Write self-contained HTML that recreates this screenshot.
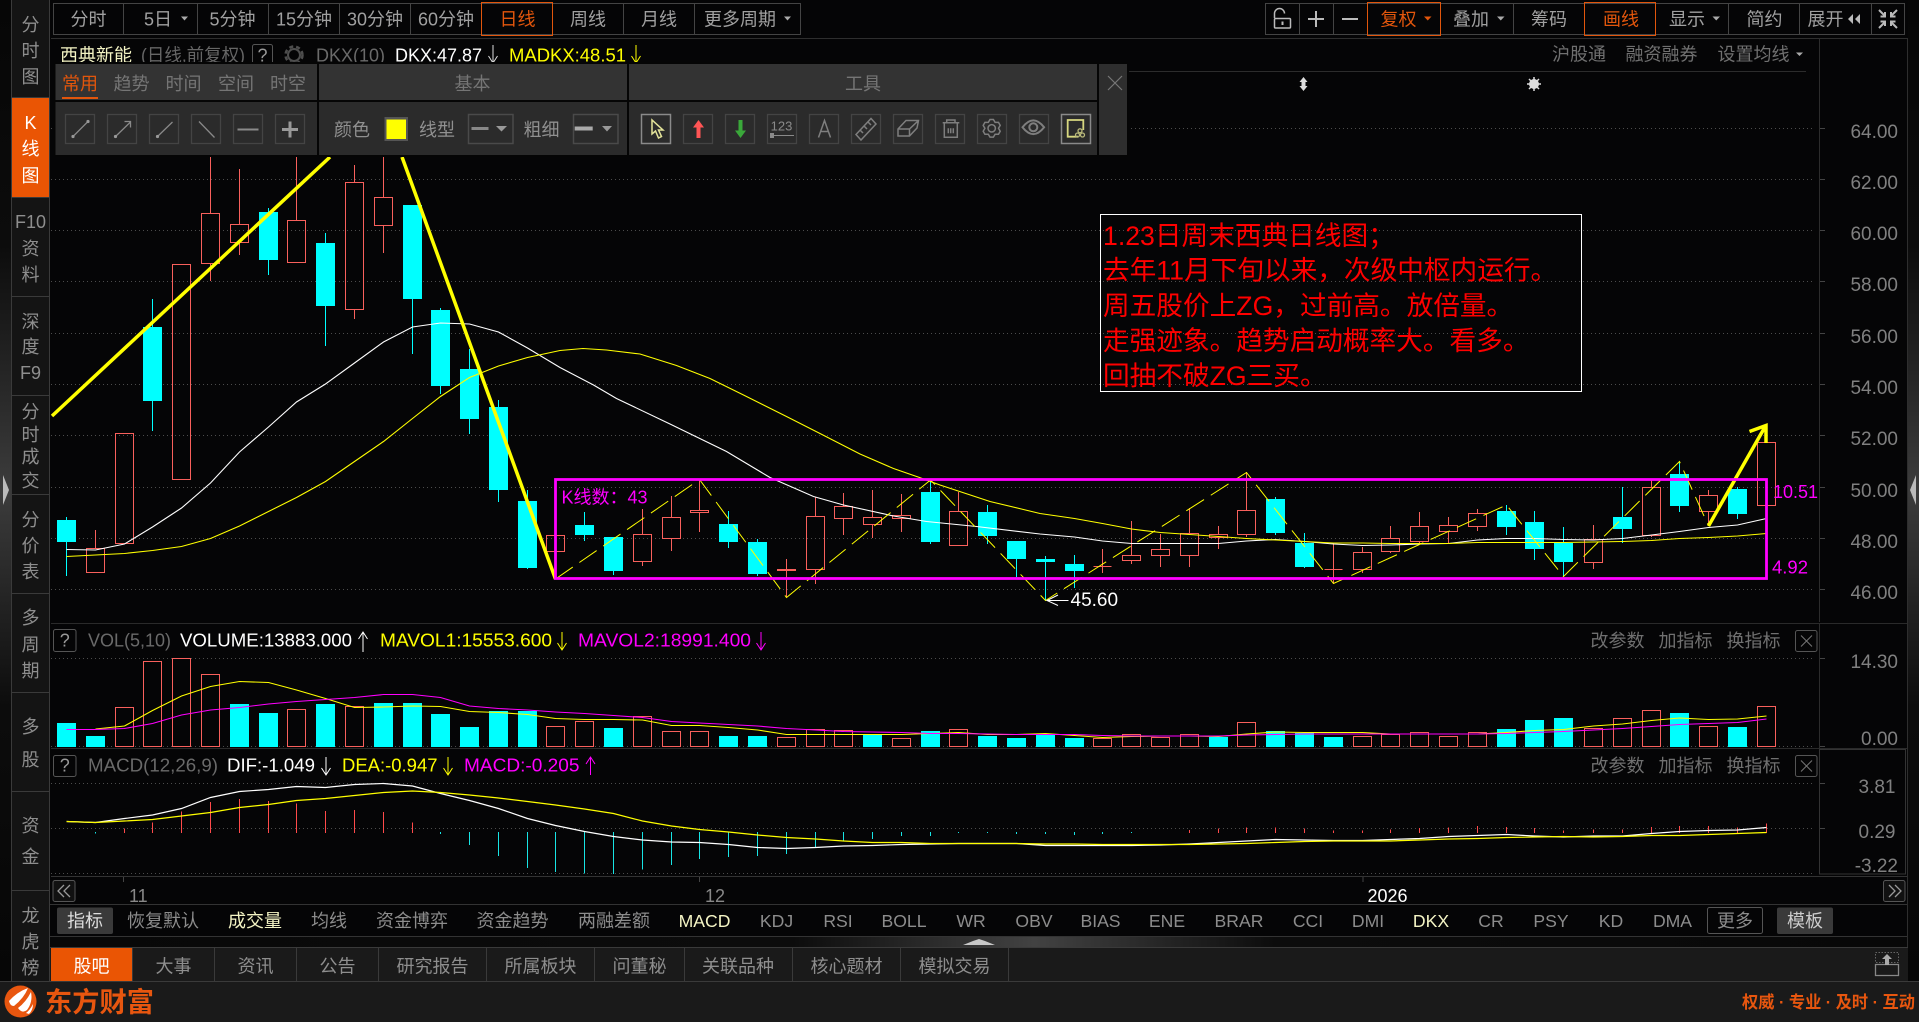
<!DOCTYPE html>
<html lang="zh"><head><meta charset="utf-8"><title>西典新能</title>
<style>html,body{margin:0;padding:0;background:#050506;overflow:hidden}svg{display:block}text{white-space:pre}</style></head>
<body>
<svg xmlns="http://www.w3.org/2000/svg" width="1919" height="1022" viewBox="0 0 1919 1022" font-family="'Liberation Sans','Noto Sans CJK SC',sans-serif" font-size="18">
<defs>
<linearGradient id="side" x1="0" y1="0" x2="0" y2="1"><stop offset="0" stop-color="#060606"/><stop offset=".25" stop-color="#0c0c0c"/><stop offset=".5" stop-color="#3c3c3c"/><stop offset=".72" stop-color="#0c0c0c"/><stop offset="1" stop-color="#060606"/></linearGradient>
<linearGradient id="split" x1="0" y1="0" x2="1" y2="0"><stop offset="0" stop-color="#080808"/><stop offset=".4" stop-color="#0c0c0c"/><stop offset=".53" stop-color="#424242"/><stop offset=".66" stop-color="#0c0c0c"/><stop offset="1" stop-color="#080808"/></linearGradient>
</defs>
<rect width="1919" height="1022" fill="#050506"/>

<!-- left strip -->
<rect x="0" y="0" width="11" height="982" fill="url(#side)"/>
<path d="M3 475L9 490L3 505Z" fill="#bbb"/>
<rect x="1908" y="0" width="11" height="982" fill="url(#side)"/>
<path d="M1916 475L1910 490L1916 505Z" fill="#bbb"/>
<rect x="11" y="0" width="39" height="982" fill="#141414"/>
<rect x="12" y="98" width="37" height="99" fill="#ea5504"/>
<path d="M12 97.5H49M12 197.5H49M12 296.5H49M12 395.5H49M12 494.5H49M12 593.5H49M12 692.5H49M12 791.5H49M12 890.5H49M49.5 0V982M11.5 0V982" stroke="#3a3a3a" fill="none"/>
<g text-anchor="middle" fill="#8e8e8e">
<text x="30.5" y="31">分</text><text x="30.5" y="57">时</text><text x="30.5" y="83">图</text>
<g fill="#fff"><text x="30.5" y="129">K</text><text x="30.5" y="155">线</text><text x="30.5" y="182">图</text></g>
<text x="30.5" y="228">F10</text><text x="30.5" y="255">资</text><text x="30.5" y="281">料</text>
<text x="30.5" y="328">深</text><text x="30.5" y="353">度</text><text x="30.5" y="379">F9</text>
<text x="30.5" y="418">分</text><text x="30.5" y="441">时</text><text x="30.5" y="463">成</text><text x="30.5" y="487">交</text>
<text x="30.5" y="526">分</text><text x="30.5" y="552">价</text><text x="30.5" y="578">表</text>
<text x="30.5" y="624">多</text><text x="30.5" y="651">周</text><text x="30.5" y="677">期</text>
<text x="30.5" y="733">多</text><text x="30.5" y="766">股</text>
<text x="30.5" y="832">资</text><text x="30.5" y="863">金</text>
<text x="30.5" y="922">龙</text><text x="30.5" y="948">虎</text><text x="30.5" y="974">榜</text>
</g>

<!-- top toolbar -->
<path d="M53.5 3.5H800.5V34.5H53.5ZM123.5 3.5V34.5M197.5 3.5V34.5M268.5 3.5V34.5M339.5 3.5V34.5M410.5 3.5V34.5M481.5 3.5V34.5M552.5 3.5V34.5M623.5 3.5V34.5M694.5 3.5V34.5" fill="none" stroke="#444"/>
<rect x="481.5" y="2.5" width="71" height="33" fill="none" stroke="#e2560c"/>
<g text-anchor="middle" fill="#a0a0a0">
<text x="88.5" y="25.5">分时</text><text x="158" y="25.5">5日</text><text x="232.5" y="25.5">5分钟</text><text x="304" y="25.5">15分钟</text><text x="375" y="25.5">30分钟</text><text x="446" y="25.5">60分钟</text>
<text x="517.5" y="25.5" fill="#e2560c">日线</text><text x="588" y="25.5">周线</text><text x="659" y="25.5">月线</text><text x="740" y="25.5">更多周期</text>
</g>
<path d="M181 16.5h7l-3.500 4zM784 16.500h7l-3.500 4z" fill="#aaa"/>
<!-- right toolbar -->
<path d="M1265.500 3.500H1904.500V34.500H1265.500ZM1299.500 3.500V34.500M1333.500 3.500V34.500M1367.500 3.500V34.500M1440.500 3.500V34.500M1513.500 3.500V34.500M1584.500 3.500V34.500M1655.500 3.500V34.500M1728.500 3.500V34.500M1799.500 3.500V34.500M1871.500 3.500V34.500" fill="none" stroke="#444"/>
<rect x="1367.500" y="2.500" width="73" height="33" fill="none" stroke="#e2560c"/>
<rect x="1584.500" y="2.500" width="71" height="33" fill="none" stroke="#e2560c"/>
<path d="M1274.500 18V13.500A5 5 0 0 1 1284.500 13.500" fill="none" stroke="#bbb" stroke-width="1.500"/>
<rect x="1274.500" y="18.500" width="16" height="9.500" rx="1" fill="none" stroke="#bbb" stroke-width="1.500"/>
<path d="M1282.500 21.500V25M1308 19H1324M1316 11V27M1342 19H1358" stroke="#bbb" stroke-width="2" fill="none"/>
<g text-anchor="middle" fill="#a0a0a0">
<text x="1398.500" y="25.500" fill="#e2560c">复权</text><text x="1471" y="25.500">叠加</text><text x="1549" y="25.500">筹码</text>
<text x="1621" y="25.500" fill="#e2560c">画线</text><text x="1687" y="25.500">显示</text><text x="1764.500" y="25.500">简约</text><text x="1825.500" y="25.500">展开</text>
</g>
<path d="M1424 16.500h7.500l-3.750 4z" fill="#e2560c"/>
<path d="M1497 16.500h7.500l-3.750 4zM1712.500 16.500h7.500l-3.750 4zM1796 52.500h7l-3.500 3.500z" fill="#aaa"/>
<path d="M1853 14L1848 19L1853 24ZM1860 14L1855 19L1860 24Z" fill="#bbb"/>
<path d="M1879 10L1885 16M1885 12V16.500H1880.500M1897 10L1891 16M1891 12V16.500H1895.500M1879 28L1885 22M1885 26V21.500H1880.500M1897 28L1891 22M1891 26V21.500H1895.500" stroke="#bbb" stroke-width="2" fill="none"/>
<path d="M51 38.500H1907M1907.500 38V982" stroke="#2e2e2e" fill="none"/>

<!-- header -->
<text x="60" y="61.500" fill="#f4f4c4">西典新能</text>
<text x="141" y="61.500" fill="#666" textLength="104" lengthAdjust="spacingAndGlyphs">(日线,前复权)</text>
<rect x="252.500" y="44.500" width="20" height="24" rx="2" fill="none" stroke="#555"/>
<text x="262.500" y="61.500" text-anchor="middle" fill="#999">?</text>
<circle cx="294" cy="55" r="6" fill="none" stroke="#4e4e4e" stroke-width="2"/><circle cx="294" cy="55" r="8.500" fill="none" stroke="#4e4e4e" stroke-width="2.500" stroke-dasharray="4 3"/>
<text x="316" y="61.500" fill="#6a6a6a" font-size="18.500" textLength="69" lengthAdjust="spacingAndGlyphs">DKX(10)</text>
<text x="395" y="61.500" fill="#fff" font-size="18.500" textLength="87" lengthAdjust="spacingAndGlyphs">DKX:47.87</text>
<path d="M493 45V63M488.500 56L493 63L497.500 56" fill="none" stroke="#ddd"/>
<text x="509" y="61.500" fill="#ff0" font-size="18.500" textLength="117" lengthAdjust="spacingAndGlyphs">MADKX:48.51</text>
<path d="M636 45V63M631.500 56L636 63L640.500 56" fill="none" stroke="#ff0"/>
<g text-anchor="middle" fill="#707070"><text x="1579" y="60.500">沪股通</text><text x="1661.500" y="60.500">融资融券</text><text x="1753.500" y="60.500">设置均线</text></g>
<path d="M1129 71.500H1806M1819.500 38V622" stroke="#2c2c2c" fill="none"/>
<path d="M1303.500 77L1307.500 82H1305.500V86H1307.500L1303.500 91L1299.500 86H1301.500V82H1299.500Z" fill="#ddd"/>
<circle cx="1534" cy="84" r="5" fill="#ddd"/><path d="M1534 77V91M1527 84H1541M1529 79L1539 89M1539 79L1529 89" stroke="#ddd" stroke-width="1.500"/>

<!-- price grid -->
<path d="M51 128.500H1815M51 179.500H1815M51 230.500H1815M51 281.500H1815M51 333.500H1815M51 384.500H1815M51 435.500H1815M51 487.500H1815M51 538.500H1815M51 589.500H1815M51 658.500H1815M51 746.500H1815M51 783.500H1815M51 828.500H1815M51 873.500H1815" stroke="#4c4c4c" stroke-dasharray="1 3" fill="none"/>
<path d="M1820 128.500H1825M1820 179.500H1825M1820 230.500H1825M1820 281.500H1825M1820 333.500H1825M1820 384.500H1825M1820 435.500H1825M1820 487.500H1825M1820 538.500H1825M1820 589.500H1825M1820 658.500H1825M1820 746.500H1825M1820 783.500H1825M1820 828.500H1825" stroke="#444" fill="none"/>
<g text-anchor="end" fill="#808080" font-size="19">
<text x="1898" y="138">64.00</text><text x="1898" y="189">62.00</text><text x="1898" y="240">60.00</text><text x="1898" y="291">58.00</text><text x="1898" y="343">56.00</text><text x="1898" y="394">54.00</text><text x="1898" y="445">52.00</text><text x="1898" y="497">50.00</text><text x="1898" y="548">48.00</text><text x="1898" y="599">46.00</text>
<text x="1898" y="668">14.30</text><text x="1898" y="745">0.00</text><text x="1895.500" y="793">3.81</text><text x="1895.500" y="838">0.29</text><text x="1898" y="872">-3.22</text>
</g>

<!-- candles red -->
<path fill="none" stroke="#f9605c" d="M86.500 548.500h18v24h-18zM95.500 530V548.500M115.500 433.500h18v110h-18zM172.500 264.500h18v215h-18zM201.500 213.500h18v50h-18zM210.500 150V213.500M210.500 263.500V281M230.500 224.500h18v18h-18zM239.500 169V224.500M239.500 242.500V255M287.500 220.500h18v42h-18zM296.500 150V220.500M345.500 182.500h18v127h-18zM354.500 165V182.500M354.500 309.500V319M374.500 197.500h18v28h-18zM383.500 150V197.500M383.500 225.500V253M546.500 535.500h18v16h-18zM633.500 534.500h18v27h-18zM642.500 509V534.500M642.500 561.500V566M662.500 517.500h18v21h-18zM671.500 496V517.500M671.500 538.500V551M690.500 510.500h18v2h-18zM699.500 479V510.500M699.500 512.500V532M777.500 569.500h18v1h-18zM786.500 559V597M806.500 516.500h18v53h-18zM815.500 497V516.500M815.500 569.500V584M834.500 506.500h18v12h-18zM843.500 493V506.500M843.500 518.500V535M863.500 517.500h18v7h-18zM872.500 490V517.500M872.500 524.500V538M892.500 515.500h18v3h-18zM901.500 494V515.500M901.500 518.500V532M949.500 511.500h18v34h-18zM958.500 492V511.500M1093.500 566.500h18M1102.500 549V573M1122.500 555.500h18v5h-18zM1131.500 521V555.500M1131.500 560.500V564M1151.500 549.500h18v6h-18zM1160.500 534V549.500M1160.500 555.500V567M1180.500 533.500h18v22h-18zM1189.500 508V533.500M1189.500 555.500V567M1209.500 534.500h18v3h-18zM1218.500 526V534.500M1218.500 537.500V549M1237.500 510.500h18v24h-18zM1246.500 472V510.500M1246.500 534.500V537M1324.500 569.500h18M1333.500 543V583M1353.500 552.500h18v17h-18zM1362.500 547V552.500M1362.500 569.500V573M1381.500 538.500h18v13h-18zM1390.500 526V538.500M1390.500 551.500V553M1410.500 526.500h18v15h-18zM1419.500 512V526.500M1419.500 541.500V544M1439.500 525.500h18v6h-18zM1448.500 517V525.500M1448.500 531.500V543M1468.500 513.500h18v13h-18zM1477.500 509V513.500M1477.500 526.500V531M1584.500 539.500h18v23h-18zM1593.500 525V539.500M1593.500 562.500V569M1642.500 487.500h18v48h-18zM1651.500 480V487.500M1651.500 535.500V537M1699.500 495.500h18v16h-18zM1708.500 490V495.500M1708.500 511.500V526M1757.500 442.500h18v63h-18z"/>
<!-- candles cyan -->
<path fill="none" stroke="#00ffff" d="M66.500 517V576M152.500 299V431M268.500 208V275M325.500 233V346M412.500 205V354M440.500 308V394M469.500 349V434M498.500 400V502M527.500 490V569M584.500 512V541M613.500 537V575M728.500 511V548M757.500 539V576M930.500 480V544M987.500 505V544M1016.500 541V577M1045.500 556V601M1074.500 555V588M1275.500 497V535M1304.500 533V568M1506.500 505V535M1534.500 511V560M1563.500 527V577M1622.500 487V543M1679.500 461V512M1737.500 487V519"/>
<path fill="#00ffff" d="M57 520h19v22h-19zM143 327h19v74h-19zM259 212h19v48h-19zM316 243h19v63h-19zM403 205h19v94h-19zM431 310h19v76h-19zM460 369h19v50h-19zM489 407h19v83h-19zM518 501h19v67h-19zM575 525h19v10h-19zM604 537h19v34h-19zM719 524h19v18h-19zM748 542h19v32h-19zM921 492h19v50h-19zM978 512h19v24h-19zM1007 541h19v18h-19zM1036 559h19v3h-19zM1065 564h19v7h-19zM1266 499h19v34h-19zM1295 543h19v24h-19zM1497 511h19v16h-19zM1525 522h19v27h-19zM1554 543h19v19h-19zM1613 517h19v12h-19zM1670 474h19v32h-19zM1728 489h19v25h-19z"/>
<!-- MA -->
<polyline fill="none" stroke="#fff" stroke-width="1.100" points="66.500,549.500 95.500,550 124.500,544 152.500,527 181.500,508 210.500,483 239.500,452 268.500,427 296.500,402 325.500,384 354.500,363 383.500,342 412.500,327 440.500,323 469.500,324 498.500,332 527.500,348 560,367.500 593.500,385 616.500,398.500 670,424 726.500,451.500 770,477.500 813.500,496.500 843.500,505 893.500,516 926.500,521.500 976.500,526.500 1040,534 1074.500,537 1102.500,541 1131.500,543.500 1160.500,543.500 1189.500,543.500 1218.500,543.500 1246.500,541 1275.500,539.500 1304.500,541.500 1333.500,544 1362.500,545.500 1390.500,545 1419.500,544 1448.500,543.500 1477.500,540 1506.500,538.500 1534.500,538.500 1563.500,539.500 1593.500,540 1622.500,538.500 1651.500,535 1679.500,531.500 1708.500,527.500 1737.500,525 1766.500,518.500"/>
<polyline fill="none" stroke="#ff0" stroke-width="1.100" points="66.500,556.500 95.500,555 124.500,553.500 152.500,550.500 181.500,546.500 210.500,538.500 239.500,526 268.500,511.500 296.500,497.500 325.500,481.500 354.500,461.500 383.500,441.500 412.500,418.500 440.500,396.500 469.500,377.500 498.500,366 527.500,357.500 560,350.500 583,348.500 606.500,350 640,354 676.500,365.500 710,378.500 743.500,395 786.500,416.500 820,433.500 860,454 893.500,468.500 919.500,477.500 940,485 990,501.500 1040,513.500 1074.500,518.500 1102.500,523.500 1131.500,529 1160.500,532.500 1189.500,534.500 1218.500,536.500 1246.500,538.500 1275.500,540 1304.500,541.500 1333.500,543 1362.500,543 1390.500,543.500 1419.500,543.500 1448.500,543.500 1477.500,542.500 1506.500,542.500 1534.500,542.500 1563.500,542.500 1593.500,542 1622.500,541.500 1651.500,540.500 1679.500,538.500 1708.500,537.500 1737.500,536 1766.500,533.500"/>
<!-- dashed zigzag -->
<polyline fill="none" stroke="#ff0" stroke-dasharray="21 8" points="555.500,579 699.500,479.500 786.500,597.500 930.500,480 1045.500,600.500 1246.500,472.500 1333.500,583.500 1506.500,505 1563.500,576.500 1679.500,461.500 1708.500,526"/>
<!-- thick lines -->
<path d="M52 416L330 157M402 157L555.500 579" stroke="#ff0" stroke-width="3.500" fill="none"/>
<path d="M1708.500 526L1765.500 426M1749.500 431.500L1766 425.500L1766 443" stroke="#ff0" stroke-width="3.500" fill="none"/>
<!-- box -->
<rect x="555.500" y="479.500" width="1211" height="99" fill="none" stroke="#ff00ff" stroke-width="2.800"/>
<text x="561.500" y="503.500" fill="#ff00ff" font-size="18">K线数：43</text>
<text x="1773" y="498" fill="#ff00ff">10.51</text>
<text x="1772" y="573.500" fill="#ff00ff" font-size="18.500">4.92</text>
<path d="M1068.500 600.500H1048M1058 595L1047 600.500L1058 605.500" stroke="#fff" fill="none"/>
<text x="1070.500" y="606" fill="#fff" font-size="19">45.60</text>
<!-- annotation -->
<rect x="1100.500" y="214.500" width="481" height="177" fill="none" stroke="#fff"/>
<g fill="#ff0000" font-size="26.670">
<text x="1103" y="245">1.23日周末西典日线图；</text>
<text x="1103" y="279.500">去年11月下旬以来，次级中枢内运行。</text>
<text x="1103" y="315">周五股价上ZG，过前高。放倍量。</text>
<text x="1103" y="350">走强迹象。趋势启动概率大。看多。</text>
<text x="1103" y="385">回抽不破ZG三买。</text>
</g>

<!-- drawing panel -->
<rect x="53.500" y="62" width="1075" height="95" fill="#050505"/>
<rect x="55.500" y="64" width="261.500" height="36" fill="#333"/><rect x="319" y="64" width="308" height="36" fill="#333"/><rect x="629" y="64" width="468" height="36" fill="#333"/>
<rect x="55.500" y="102" width="261.500" height="53" fill="#2b2b2b"/><rect x="319" y="102" width="308" height="53" fill="#2b2b2b"/><rect x="629" y="102" width="468" height="53" fill="#2b2b2b"/>
<rect x="1099" y="64" width="28" height="91" fill="#2e2e2e"/>
<path d="M1108 76L1122 90M1122 76L1108 90" stroke="#777" stroke-width="1.200"/>
<g text-anchor="middle" fill="#757575">
<text x="80" y="90" fill="#e2560c">常用</text><text x="131.500" y="90">趋势</text><text x="183.500" y="90">时间</text><text x="236" y="90">空间</text><text x="288" y="90">时空</text>
<text x="472.500" y="90">基本</text><text x="863" y="90">工具</text>
<text x="352" y="136" fill="#909090">颜色</text><text x="437" y="136" fill="#909090">线型</text><text x="541.500" y="136" fill="#909090">粗细</text>
</g>
<rect x="62" y="97" width="36" height="2" fill="#e2560c"/>
<g fill="none" stroke="#444" stroke-width="1.300">
<rect x="65.500" y="114.500" width="29" height="29"/><rect x="107.500" y="114.500" width="29" height="29"/><rect x="149.500" y="114.500" width="29" height="29"/><rect x="191.500" y="114.500" width="29" height="29"/><rect x="233.500" y="114.500" width="29" height="29"/><rect x="275.500" y="114.500" width="29" height="29"/>
<rect x="683.500" y="114.500" width="29" height="29"/><rect x="725.500" y="114.500" width="29" height="29"/><rect x="767.500" y="114.500" width="29" height="29"/><rect x="809.500" y="114.500" width="29" height="29"/><rect x="851.500" y="114.500" width="29" height="29"/><rect x="893.500" y="114.500" width="29" height="29"/><rect x="935.500" y="114.500" width="29" height="29"/><rect x="977.500" y="114.500" width="29" height="29"/><rect x="1019.500" y="114.500" width="29" height="29"/>
</g>
<g fill="none" stroke="#8a8a8a" stroke-width="1.300">
<rect x="641.500" y="114.500" width="29" height="29" stroke-width="1.500"/><rect x="1061.500" y="114.500" width="29" height="29" stroke-width="1.500"/>
<path d="M73 136.500L88 121.500M115.500 136.500L130.500 122M124.500 121.500H130.500V127.500M157.500 136.500L172.500 122M199 121.500L214.500 137.500"/>
<path d="M237.500 129.500H258.500" stroke-width="2"/><path d="M282 129.500H298M290 121.500V137.500" stroke-width="3" stroke="#999"/>
</g>
<circle cx="73" cy="136.500" r="1.600" fill="#999"/><circle cx="88" cy="121.500" r="1.600" fill="#999"/><circle cx="115.500" cy="136.500" r="1.600" fill="#999"/><circle cx="157.500" cy="136.500" r="1.600" fill="#999"/>
<rect x="384.500" y="117" width="23.500" height="24" fill="#555"/><rect x="386.500" y="119.500" width="19.500" height="19.500" fill="#ffff00"/>
<rect x="468.500" y="114.500" width="44.500" height="29" fill="none" stroke="#4a4a4a" stroke-width="1.500"/><rect x="573.500" y="114.500" width="44.500" height="29" fill="none" stroke="#4a4a4a" stroke-width="1.500"/>
<path d="M471.500 128.500H488.500" stroke="#888" stroke-width="3"/><path d="M574.700 128.500H592.700" stroke="#aaa" stroke-width="4"/>
<path d="M496 126h11l-5.500 5.500zM602 126h10l-5 5.500z" fill="#999"/>
<!-- tool icons -->
<path d="M652 120V134L655.500 131L658.500 138L661.500 136.500L658.500 130H663Z" fill="none" stroke="#e4e49a" stroke-width="1.500"/>
<path d="M698.500 120L704 127.500H700.500V138H696.500V127.500H693Z" fill="#ff5555"/>
<path d="M740.500 138L746 130.500H742.500V120H738.500V130.500H735Z" fill="#3aa83a"/>
<text x="781.500" y="130.500" text-anchor="middle" font-size="13" fill="#8a8a8a">123</text>
<path d="M771 135.500H794" stroke="#8a8a8a"/><rect x="770" y="133" width="4" height="5" fill="#8a8a8a"/>
<g fill="none" stroke="#7e7e7e" stroke-width="1.500">
<path d="M818.500 137.500L824.500 120.500L830.500 137.500M820.500 131.500H828.500"/>
<path d="M856 134.500L871 118.500L876 124L861 140ZM860 130L863 133M864 126L867 129M868 122L871 125"/>
<path d="M898 129L906 120.500H918.500L917 128L909.500 136H898ZM898 129H909.500V136M909.500 129L918.500 120.500"/>
<path d="M942.700 122.700H959.300M946.700 122.700V120H955V122.700M944.300 122.700V137.300H957.300V122.700M948.300 128.300V133.300M950.700 128.300V133.300M953.300 128.300V133.300"/>
<path d="M990 119.500L993.400 119.500L995.100 122.400L998.500 122.400L1000.200 125.400L998.500 128.300L1000.200 131.200L998.500 134.200L995.100 134.200L993.400 137.100L990 137.100L988.300 134.200L984.900 134.200L983.200 131.200L984.900 128.300L983.200 125.400L984.900 122.400L988.300 122.400Z"/>
<circle cx="991.700" cy="128.300" r="3.700"/>
<path d="M1022.500 127.300Q1033.300 113.500 1044.100 127.300Q1033.300 141 1022.500 127.300Z" stroke-width="2"/><circle cx="1033.300" cy="127.300" r="4" stroke-width="2"/>
</g>
<path d="M1078 136.700H1067.700V120H1083.300V130" fill="none" stroke="#d8d880" stroke-width="1.800"/>
<circle cx="1080" cy="130.800" r="2" fill="none" stroke="#b9b97a" stroke-width="1.300"/><circle cx="1077.500" cy="135" r="2" fill="none" stroke="#b9b97a" stroke-width="1.300"/><circle cx="1082.500" cy="135" r="2" fill="none" stroke="#b9b97a" stroke-width="1.300"/>

<!-- VOL -->
<path d="M51 623.500H1907M51 748.500H1907" stroke="#2a2a2a"/>
<path d="M1819.500 623V749" stroke="#2c2c2c"/>
<rect x="53.500" y="629.500" width="22.500" height="22" rx="2" fill="none" stroke="#555"/>
<text x="64.700" y="646.500" text-anchor="middle" fill="#999">?</text>
<text x="88" y="646.500" fill="#6a6a6a" font-size="18.500" textLength="83" lengthAdjust="spacingAndGlyphs">VOL(5,10)</text>
<text x="180" y="646.500" fill="#fff" font-size="18.500" textLength="172" lengthAdjust="spacingAndGlyphs">VOLUME:13883.000</text><path d="M363 632V652M358.500 639L363 632L367.500 639" fill="none" stroke="#fff"/>
<text x="380" y="646.500" fill="#ff0" font-size="18.500" textLength="172" lengthAdjust="spacingAndGlyphs">MAVOL1:15553.600</text><path d="M562 632V650M557.500 643L562 650L566.500 643" fill="none" stroke="#ff0"/>
<text x="578" y="646.500" fill="#f0f" font-size="18.500" textLength="173" lengthAdjust="spacingAndGlyphs">MAVOL2:18991.400</text><path d="M761 632V650M756.500 643L761 650L765.500 643" fill="none" stroke="#f0f"/>
<g text-anchor="middle" fill="#707070"><text x="1617.500" y="647">改参数</text><text x="1685.500" y="647">加指标</text><text x="1753.500" y="647">换指标</text>
<text x="1617.500" y="772">改参数</text><text x="1685.500" y="772">加指标</text><text x="1753.500" y="772">换指标</text></g>
<rect x="1795.500" y="630.500" width="21.500" height="21" rx="2" fill="none" stroke="#555"/><path d="M1801 635.500L1812 646.500M1812 635.500L1801 646.500" stroke="#777"/>
<rect x="1795.500" y="755.500" width="21.500" height="21" rx="2" fill="none" stroke="#555"/><path d="M1801 760.500L1812 771.500M1812 760.500L1801 771.500" stroke="#777"/>
<path fill="none" stroke="#f9605c" d="M115.500 707.500h18V746.500h-18zM143.500 661.500h18V746.500h-18zM172.500 658.500h18V746.500h-18zM201.500 674.500h18V746.500h-18zM287.500 709.500h18V746.500h-18zM345.500 706.500h18V746.500h-18zM546.500 726.500h18V746.500h-18zM575.500 721.500h18V746.500h-18zM633.500 716.500h18V746.500h-18zM662.500 731.500h18V746.500h-18zM690.500 731.500h18V746.500h-18zM777.500 737.500h18V746.500h-18zM806.500 729.500h18V746.500h-18zM834.500 730.500h18V746.500h-18zM892.500 738.500h18V746.500h-18zM949.500 729.500h18V746.500h-18zM1093.500 738.500h18V746.500h-18zM1122.500 734.500h18V746.500h-18zM1151.500 737.500h18V746.500h-18zM1180.500 734.500h18V746.500h-18zM1237.500 722.500h18V746.500h-18zM1353.500 736.500h18V746.500h-18zM1381.500 734.500h18V746.500h-18zM1410.500 732.500h18V746.500h-18zM1439.500 736.500h18V746.500h-18zM1468.500 732.500h18V746.500h-18zM1584.500 728.500h18V746.500h-18zM1613.500 718.500h18V746.500h-18zM1642.500 710.500h18V746.500h-18zM1699.500 726.500h18V746.500h-18zM1757.500 706.500h18V746.500h-18z"/>
<path fill="#00ffff" d="M57 723h19V747h-19zM86 736h19V747h-19zM230 704h19V747h-19zM259 713h19V747h-19zM316 704h19V747h-19zM374 703h19V747h-19zM403 703h19V747h-19zM431 714h19V747h-19zM460 727h19V747h-19zM489 711h19V747h-19zM518 711h19V747h-19zM604 728h19V747h-19zM719 736h19V747h-19zM748 736h19V747h-19zM863 735h19V747h-19zM921 731h19V747h-19zM978 736h19V747h-19zM1007 738h19V747h-19zM1036 735h19V747h-19zM1065 738h19V747h-19zM1209 737h19V747h-19zM1266 731h19V747h-19zM1295 733h19V747h-19zM1324 737h19V747h-19zM1497 729h19V747h-19zM1525 720h19V747h-19zM1554 718h19V747h-19zM1670 713h19V747h-19zM1728 727h19V747h-19z"/>
<polyline fill="none" stroke="#ff0" stroke-width="1.100" points="95.500,729 124.500,726 152.500,710.500 181.500,696 210.500,686.500 239.500,681.500 268.500,682.500 296.500,690 325.500,698.500 354.500,707.500 383.500,707 412.500,706 440.500,706.500 469.500,711.500 498.500,712.500 527.500,714.500 555.500,718.500 584.500,719.500 613.500,719.500 642.500,720 671.500,725.500 699.500,725.500 728.500,727.500 757.500,730 786.500,734.500 815.500,734.500 843.500,734.500 872.500,734.500 901.500,734.500 930.500,733.500 958.500,732.500 987.500,734.500 1016.500,734.500 1045.500,733.500 1074.500,735.500 1102.500,737.500 1131.500,736.500 1160.500,736 1189.500,736 1218.500,736.500 1246.500,734 1275.500,732 1304.500,732.500 1333.500,732.500 1362.500,732.500 1390.500,734 1419.500,734 1448.500,734 1477.500,734 1506.500,732.500 1534.500,730.500 1563.500,729.500 1593.500,726 1622.500,724 1651.500,720.500 1679.500,718 1708.500,719.500 1737.500,719 1766.500,716"/>
<polyline fill="none" stroke="#f0f" stroke-width="1.100" points="66.500,729.500 95.500,729.500 124.500,728.500 152.500,723.500 181.500,715 210.500,710 239.500,707.500 268.500,704 296.500,701.500 325.500,699.500 354.500,697.500 383.500,694.500 412.500,694.500 440.500,697.500 469.500,706 498.500,708.500 527.500,710 555.500,712 584.500,713.500 613.500,715.500 642.500,717.500 671.500,721.500 699.500,723 728.500,724.500 757.500,726 786.500,728.500 815.500,730 843.500,731.500 872.500,732 901.500,732.500 930.500,733.500 958.500,733.500 987.500,734 1016.500,734.500 1045.500,734.500 1074.500,734.500 1102.500,735.500 1131.500,736 1160.500,736 1189.500,736 1218.500,736 1246.500,735 1275.500,734.500 1304.500,734 1333.500,734 1362.500,734 1390.500,734 1419.500,734 1448.500,734 1477.500,734 1506.500,733.500 1534.500,732.500 1563.500,731.500 1593.500,730 1622.500,728.500 1651.500,726.500 1679.500,724.500 1708.500,723.500 1737.500,722.500 1766.500,719"/>

<!-- MACD -->
<rect x="53.500" y="755.500" width="22.500" height="21" rx="2" fill="none" stroke="#555"/>
<text x="64.700" y="771.500" text-anchor="middle" fill="#999">?</text>
<text x="88" y="771.500" fill="#6a6a6a" font-size="18.500" textLength="130" lengthAdjust="spacingAndGlyphs">MACD(12,26,9)</text>
<text x="227" y="771.500" fill="#fff" font-size="18.500" textLength="88" lengthAdjust="spacingAndGlyphs">DIF:-1.049</text><path d="M326 757V775M321.500 768L326 775L330.500 768" fill="none" stroke="#fff"/>
<text x="342" y="771.500" fill="#ff0" font-size="18.500" textLength="95.500" lengthAdjust="spacingAndGlyphs">DEA:-0.947</text><path d="M448 757V775M443.500 768L448 775L452.500 768" fill="none" stroke="#ff0"/>
<text x="464" y="771.500" fill="#f0f" font-size="18.500" textLength="115.500" lengthAdjust="spacingAndGlyphs">MACD:-0.205</text><path d="M590.500 757V775M586 764L590.500 757L595 764" fill="none" stroke="#f0f"/>
<path d="M1819.500 749.500H1905.500V874H1819.500Z" fill="none" stroke="#333"/>
<path fill="none" stroke="#ff4a4a" d="M124.500 828.500V833M152.500 822.500V833M181.500 811.500V833M210.500 802V833M239.500 799V833M268.500 801V833M296.500 803.500V833M325.500 811V833M354.500 810V833M383.500 812V833M412.500 822.500V833M1189.500 830V833M1218.500 828.500V833M1246.500 827.500V833M1275.500 827.500V833M1304.500 828.500V833M1333.500 830.500V833M1362.500 830.500V833M1390.500 829.500V833M1419.500 828V833M1448.500 827.500V833M1477.500 826V833M1506.500 827V833M1534.500 828V833M1563.500 830.500V833M1593.500 829.500V833M1622.500 829.500V833M1651.500 827V833M1679.500 826V833M1708.500 826V833M1737.500 827.500V833M1766.500 823.500V833"/>
<path fill="none" stroke="#18e4e4" d="M95.500 832V833.500M440.500 832V834M469.500 832V845M498.500 832V856M527.500 832V868M555.500 832V872M584.500 832V873.500M613.500 832V874M642.500 832V869.500M671.500 832V865M699.500 832V859M728.500 832V857M757.500 832V856M786.500 832V854M815.500 832V848M843.500 832V841.500M872.500 832V839M901.500 832V836M930.500 832V836M958.500 832V833M987.500 832V833M1016.500 832V834M1045.500 832V834M1074.500 832V835M1102.500 832V834M1131.500 832V833"/>
<polyline fill="none" stroke="#fff" stroke-width="1.200" points="66.500,821.500 95.500,822.500 124.500,818.500 152.500,815 181.500,808.500 210.500,797.500 239.500,791.500 268.500,789.500 296.500,786.500 325.500,787.500 354.500,784.500 383.500,783.500 412.500,786 440.500,793.500 469.500,800.500 498.500,808.500 527.500,818.500 555.500,825.500 584.500,831.500 613.500,836.500 642.500,840 671.500,842 699.500,842.500 728.500,844.500 757.500,847.500 786.500,848.500 815.500,847.500 843.500,846 872.500,845.500 901.500,844.500 930.500,844 958.500,843.500 987.500,843.500 1016.500,843.500 1045.500,845.500 1074.500,845.500 1102.500,845.500 1131.500,845.500 1160.500,845 1189.500,844 1218.500,842.500 1246.500,841 1275.500,839.500 1304.500,840 1333.500,840.500 1362.500,840.500 1390.500,839.500 1419.500,838.500 1448.500,836.500 1477.500,835.500 1506.500,834.500 1534.500,836 1563.500,837 1593.500,836 1622.500,836 1651.500,833.500 1679.500,831.500 1708.500,830.500 1737.500,830 1766.500,827.500"/>
<polyline fill="none" stroke="#ff0" stroke-width="1.200" points="66.500,821.500 95.500,822.500 124.500,821 152.500,819.500 181.500,816 210.500,812.500 239.500,807.500 268.500,804.500 296.500,800.500 325.500,798.500 354.500,795.500 383.500,792.500 412.500,791 440.500,792.500 469.500,795 498.500,798 527.500,801.500 555.500,805 584.500,809 613.500,813.500 642.500,821 671.500,826 699.500,829.500 728.500,832 757.500,835 786.500,837.500 815.500,839 843.500,841 872.500,842.500 901.500,842.500 930.500,843.500 958.500,843.500 987.500,843.500 1016.500,843.500 1045.500,844 1074.500,844 1102.500,844.500 1131.500,844.500 1160.500,844.500 1189.500,844.500 1218.500,844 1246.500,843.500 1275.500,842.500 1304.500,841.500 1333.500,841 1362.500,841 1390.500,841 1419.500,840 1448.500,839 1477.500,838.500 1506.500,837.500 1534.500,837 1563.500,836.500 1593.500,837 1622.500,836.500 1651.500,835.500 1679.500,835.500 1708.500,834.500 1737.500,833.500 1766.500,832.500"/>

<!-- time axis -->
<path d="M51 876.500H1907M50 904.500H1907M50 936.500H1907" stroke="#333"/>
<path d="M123.500 877V882M699.500 877V882M1363 877V882" stroke="#444"/>
<rect x="53" y="880.500" width="22" height="21" rx="2" fill="#111" stroke="#555"/><path d="M64 885L58 891L64 897M70 885L64 891L70 897" fill="none" stroke="#999" stroke-width="1.300"/>
<rect x="1883.500" y="880.500" width="21.500" height="21" rx="2" fill="#111" stroke="#555"/><path d="M1889 885L1895 891L1889 897M1895 885L1901 891L1895 897" fill="none" stroke="#999" stroke-width="1.300"/>
<text x="129" y="902" fill="#888">11</text><text x="705" y="902" fill="#888">12</text><text x="1367.500" y="902" fill="#fff">2026</text>

<!-- indicator tabs -->
<rect x="57" y="907.500" width="56" height="26.500" rx="2" fill="#3a3a3a"/>
<rect x="1707.500" y="907.500" width="55" height="26" rx="2" fill="none" stroke="#555"/>
<rect x="1777" y="907.500" width="56" height="26.500" rx="2" fill="#3a3a3a"/>
<g text-anchor="middle" fill="#8c8c8c" font-size="17.600">
<text x="85" y="927" fill="#ddd" font-size="18">指标</text><text x="163" y="927" font-size="18">恢复默认</text><text x="255" y="927" fill="#f4f4c4" font-size="18">成交量</text><text x="329" y="927" font-size="18">均线</text><text x="412" y="927" font-size="18">资金博弈</text><text x="512.500" y="927" font-size="18">资金趋势</text><text x="614" y="927" font-size="18">两融差额</text>
<text x="704.500" y="927" fill="#f4f4c4">MACD</text><text x="776.500" y="927">KDJ</text><text x="838" y="927">RSI</text><text x="904" y="927">BOLL</text><text x="971" y="927">WR</text><text x="1034" y="927">OBV</text><text x="1100.500" y="927">BIAS</text><text x="1167" y="927">ENE</text><text x="1239" y="927">BRAR</text><text x="1308" y="927">CCI</text><text x="1368" y="927">DMI</text><text x="1431" y="927" fill="#f4f4c4">DKX</text><text x="1491" y="927">CR</text><text x="1551" y="927">PSY</text><text x="1611" y="927">KD</text><text x="1672.500" y="927">DMA</text>
<text x="1735" y="927" font-size="18">更多</text><text x="1805" y="927" fill="#ccc" font-size="18">模板</text>
</g>
<!-- splitter -->
<rect x="50" y="937" width="1857" height="10" fill="url(#split)"/>
<path d="M963 945L973 941L979 939L985 941L995 945Z" fill="#c8c8c8"/>

<!-- bottom tabs -->
<rect x="50" y="947" width="1858" height="34" fill="#1a1a1a"/>
<rect x="0" y="981" width="1919" height="41" fill="#1a1a1a"/>
<rect x="51" y="948" width="81" height="33" fill="#ea5504"/>
<path d="M50 947.500H1908M0 981.500H1919M132.500 948V981M214.500 948V981M296.500 948V981M378.500 948V981M486.500 948V981M594.500 948V981M684.500 948V981M792.500 948V981M900.500 948V981M1008.500 948V981" stroke="#3a3a3a"/>
<g text-anchor="middle" fill="#8e8e8e">
<text x="91.500" y="972.500" fill="#fff">股吧</text><text x="173.500" y="972.500">大事</text><text x="255.500" y="972.500">资讯</text><text x="337.500" y="972.500">公告</text><text x="432.500" y="972.500">研究报告</text><text x="540.500" y="972.500">所属板块</text><text x="639.500" y="972.500">问董秘</text><text x="738" y="972.500">关联品种</text><text x="846.500" y="972.500">核心题材</text><text x="954.500" y="972.500">模拟交易</text>
</g>
<path d="M1875.500 952.500H1898.500V962.500H1875.500Z" fill="none" stroke="#666" stroke-dasharray="1.500 1.500"/>
<path d="M1875.500 964.500H1898.500V975.500H1875.500Z" fill="none" stroke="#888" stroke-width="1.300"/>
<path d="M1887 954L1892 959H1889V965H1885V959H1882Z" fill="#aaa"/>
<!-- logo -->
<circle cx="20.500" cy="1001.500" r="16" fill="#e8560f"/>
<path d="M9 1001Q17 992 28 988Q24 998 14 1006Q10 1006 9 1001ZM18 1008Q26 1002 31 992Q33 1002 27 1010Q22 1014 18 1008Z" fill="#fff"/>
<path d="M26 1013Q30 1010 33 1004Q33 1010 29 1014Z" fill="#fff"/>
<text x="45" y="1011.500" fill="#e8560f" font-size="27.500" font-weight="700" textLength="109" lengthAdjust="spacingAndGlyphs">东方财富</text>
<text x="1742" y="1008" fill="#e8560f" font-size="17" font-weight="700" textLength="173" lengthAdjust="spacingAndGlyphs">权威 · 专业 · 及时 · 互动</text>
</svg>
</body></html>
